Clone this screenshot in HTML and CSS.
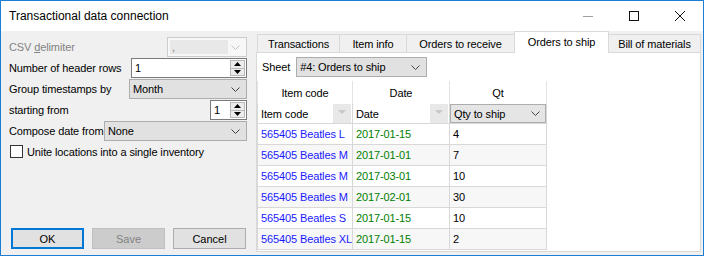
FILE: index.html
```html
<!DOCTYPE html>
<html lang="en">
<head>
  <meta charset="UTF-8" />
  <title>Transactional data connection</title>
  <link rel="stylesheet" href="styles.css">
</head>
<body>
  <div class="window">
    <div class="titlebar">
      <span class="title">Transactional data connection</span>
      <span class="caption-btn">
        <svg width="10" height="1" viewBox="0 0 10 1"><rect width="10" height="1" fill="#a0a0a0"/></svg>
      </span>
      <span class="caption-btn">
        <svg width="10" height="10" viewBox="0 0 10 10"><rect x="0.5" y="0.5" width="9" height="9" fill="none" stroke="#111"/></svg>
      </span>
      <span class="caption-btn">
        <svg width="10" height="10" viewBox="0 0 10 10"><path d="M0 0L10 10M10 0L0 10" stroke="#111" stroke-width="1"/></svg>
      </span>
    </div>

    <div class="main">
      <div class="settings">
        <div class="field">
          <label class="disabled">CSV <u>d</u>elimiter</label>
          <div class="combo combo-off w-csv">
            <span class="combo-field">,</span>
            <svg class="chev" width="9" height="5" viewBox="0 0 9 5"><path d="M0.5 0.5L4.5 4.5L8.5 0.5" fill="none" stroke="#c4c4c4"/></svg>
          </div>
        </div>
        <div class="field">
          <label>Number of header rows</label>
          <div class="spin w-rows">
            <span class="spin-value">1</span>
            <span class="spin-arrows">
              <span class="spin-btn"><svg width="7" height="4" viewBox="0 0 7 4"><path d="M3.5 0L7 4H0Z" fill="#000"/></svg></span>
              <span class="spin-btn"><svg width="7" height="4" viewBox="0 0 7 4"><path d="M0 0H7L3.5 4Z" fill="#000"/></svg></span>
            </span>
          </div>
        </div>
        <div class="field">
          <label>Group timestamps by</label>
          <div class="combo w-group">
            <span>Month</span>
            <svg class="chev" width="9" height="5" viewBox="0 0 9 5"><path d="M0.5 0.5L4.5 4.5L8.5 0.5" fill="none" stroke="#444"/></svg>
          </div>
        </div>
        <div class="field">
          <label>starting from</label>
          <div class="spin w-start">
            <span class="spin-value">1</span>
            <span class="spin-arrows">
              <span class="spin-btn"><svg width="7" height="4" viewBox="0 0 7 4"><path d="M3.5 0L7 4H0Z" fill="#000"/></svg></span>
              <span class="spin-btn"><svg width="7" height="4" viewBox="0 0 7 4"><path d="M0 0H7L3.5 4Z" fill="#000"/></svg></span>
            </span>
          </div>
        </div>
        <div class="field">
          <label>Compose date from</label>
          <div class="combo w-compose">
            <span>None</span>
            <svg class="chev" width="9" height="5" viewBox="0 0 9 5"><path d="M0.5 0.5L4.5 4.5L8.5 0.5" fill="none" stroke="#444"/></svg>
          </div>
        </div>
        <div class="check">
          <span class="check-box"></span>
          <span>Unite locations into a single inventory</span>
        </div>

        <div class="actions">
          <button class="btn btn-default">OK</button>
          <button class="btn" disabled>Save</button>
          <button class="btn">Cancel</button>
        </div>
      </div>

      <div class="tabs-area">
        <div class="tabstrip">
          <span class="tab w-t1">Transactions</span>
          <span class="tab w-t2">Item info</span>
          <span class="tab w-t3">Orders to receive</span>
          <span class="tab tab-active w-t4">Orders to ship</span>
          <span class="tab w-t5">Bill of materials</span>
        </div>
        <div class="panel">
          <div class="sheet">
            <label>Sheet</label>
            <div class="combo w-sheet">
              <span>#4: Orders to ship</span>
              <svg class="chev" width="9" height="5" viewBox="0 0 9 5"><path d="M0.5 0.5L4.5 4.5L8.5 0.5" fill="none" stroke="#444"/></svg>
            </div>
          </div>

          <table class="grid">
            <colgroup>
              <col class="c1"><col class="c2"><col class="c3">
            </colgroup>
            <thead>
              <tr class="group-row">
                <th>Item code</th>
                <th>Date</th>
                <th>Qt</th>
              </tr>
              <tr class="map-row">
                <th><div class="map"><span>Item code</span><span class="filter"><svg width="8" height="4" viewBox="0 0 8 4"><path d="M0 0H8L4 4Z" fill="#c8c8c8"/></svg></span></div></th>
                <th><div class="map"><span>Date</span><span class="filter"><svg width="8" height="4" viewBox="0 0 8 4"><path d="M0 0H8L4 4Z" fill="#c8c8c8"/></svg></span></div></th>
                <th><div class="map map-combo"><span>Qty to ship</span><svg class="chev" width="9" height="5" viewBox="0 0 9 5"><path d="M0.5 0.5L4.5 4.5L8.5 0.5" fill="none" stroke="#444"/></svg></div></th>
              </tr>
            </thead>
            <tbody>
              <tr><td class="code">565405 Beatles L</td><td class="date">2017-01-15</td><td>4</td></tr>
              <tr><td class="code">565405 Beatles M</td><td class="date">2017-01-01</td><td>7</td></tr>
              <tr><td class="code">565405 Beatles M</td><td class="date">2017-03-01</td><td>10</td></tr>
              <tr><td class="code">565405 Beatles M</td><td class="date">2017-02-01</td><td>30</td></tr>
              <tr><td class="code">565405 Beatles S</td><td class="date">2017-01-15</td><td>10</td></tr>
              <tr><td class="code">565405 Beatles XL</td><td class="date">2017-01-15</td><td>2</td></tr>
            </tbody>
          </table>
        </div>
      </div>
    </div>
  </div>
</body>
</html>
```

FILE: styles.css
```css
body {
  margin: 0;
  font-family: "Liberation Sans", Arial, sans-serif;
  font-size: 11px;
  letter-spacing: -0.12px;
  color: #000;
  background: #fff;
}
.window {
  width: 704px;
  height: 256px;
  box-sizing: border-box;
  border: 1px solid #1a7ed6;
  background: #f0f0f0;
  display: flex;
  flex-direction: column;
}

/* title bar */
.titlebar {
  height: 30px;
  flex: none;
  background: #fff;
  display: flex;
  align-items: center;
}
.title {
  flex: 1;
  padding-left: 8px;
  font-size: 12px;
  letter-spacing: 0;
}
.caption-btn {
  width: 46px;
  height: 30px;
  display: flex;
  align-items: center;
  justify-content: center;
}

.main {
  flex: 1;
  display: flex;
  min-height: 0;
}

/* left settings column */
.settings {
  width: 255px;
  box-sizing: border-box;
  padding: 6px 9px 6px 8px;
  display: flex;
  flex-direction: column;
}
.field {
  display: flex;
  align-items: center;
  height: 20px;
  margin-bottom: 1px;
}
.field label {
  white-space: nowrap;
}
.field > .combo, .field > .spin {
  margin-left: auto;
}
.disabled {
  color: #838383;
}

.combo {
  box-sizing: border-box;
  height: 20px;
  border: 1px solid #adadad;
  background: #e1e1e1;
  display: flex;
  align-items: center;
  padding: 0 6px 0 3px;
  white-space: nowrap;
}
.combo .chev {
  margin-left: auto;
}
.combo-off {
  border-color: #cccccc;
  background: #f7f7f7;
  padding-left: 2px;
}
.combo-field {
  width: 58px;
  height: 14px;
  background: #e8e8e8;
  color: #838383;
  line-height: 14px;
  padding-left: 2px;
  box-sizing: border-box;
}

.spin {
  box-sizing: border-box;
  height: 20px;
  border: 1px solid #7a7a7a;
  background: #fff;
  display: flex;
}
.spin-value {
  flex: 1;
  padding-left: 3px;
  line-height: 18px;
}
.spin-arrows {
  width: 15px;
  display: flex;
  flex-direction: column;
  padding: 1px 1px 1px 0;
}
.spin-btn {
  flex: 1;
  border: 1px solid #b9b9b9;
  background: #ececec;
  display: flex;
  align-items: center;
  justify-content: center;
}
.spin-btn + .spin-btn {
  border-top: none;
}

.w-csv { width: 80px; }
.w-rows { width: 116px; }
.w-group { width: 118px; }
.w-start { width: 37px; }
.w-compose { width: 143px; }
.w-sheet { width: 131px; }

.check {
  display: flex;
  align-items: center;
  gap: 4px;
  margin-top: 3px;
  padding-left: 1px;
}
.check-box {
  width: 13px;
  height: 13px;
  box-sizing: border-box;
  border: 1px solid #333;
  background: #fff;
}

.actions {
  margin-top: auto;
  display: flex;
  gap: 8px;
  padding-left: 2px;
}
.btn {
  width: 73px;
  height: 21px;
  box-sizing: border-box;
  border: 1px solid #adadad;
  background: #e1e1e1;
  font: inherit;
  color: #000;
  padding: 0;
}
.btn-default {
  border: 2px solid #0078d7;
}
.btn:disabled {
  background: #cccccc;
  border-color: #bfbfbf;
  color: #838383;
}

/* right tabs */
.tabs-area {
  flex: 1;
  display: flex;
  flex-direction: column;
  padding: 0 2px 3px 0;
}
.tabstrip {
  height: 21px;
  flex: none;
  display: flex;
  align-items: flex-end;
  padding-left: 1px;
  position: relative;
  z-index: 1;
}
.tab {
  height: 18px;
  box-sizing: border-box;
  border: 1px solid #d9d9d9;
  border-bottom: none;
  background: #f0f0f0;
  display: flex;
  align-items: center;
  justify-content: center;
  white-space: nowrap;
}
.tab + .tab {
  margin-left: -1px;
}
.tab-active {
  height: 22px;
  margin-bottom: -1px;
  background: #fff;
  padding-bottom: 2px;
}
.w-t1 { width: 83px; }
.w-t2 { width: 68px; }
.w-t3 { width: 109px; }
.w-t4 { width: 95px; }
.w-t5 { width: 93px; }

.panel {
  flex: 1;
  border: 1px solid #d9d9d9;
  background: #fff;
}
.sheet {
  display: flex;
  align-items: center;
  gap: 6px;
  height: 20px;
  margin: 4px 0 4px 5px;
}

/* data grid */
.grid {
  border-collapse: collapse;
  table-layout: fixed;
  width: 289px;
}
.c1 { width: 95px; }
.c2 { width: 97px; }
.c3 { width: 97px; }
.grid th, .grid td {
  padding: 0;
  font-weight: normal;
  white-space: nowrap;
  overflow: hidden;
}
.group-row th {
  height: 23px;
  text-align: center;
  border-left: 1px solid #e3e3e3;
  border-right: 1px solid #e3e3e3;
}
.map-row th {
  height: 19px;
  text-align: left;
  border: 1px solid #d8d8d8;
  border-top: none;
}
.map {
  display: flex;
  align-items: center;
  height: 19px;
  padding-left: 3px;
}
.filter {
  margin-left: auto;
  margin-right: 1px;
  width: 18px;
  height: 19px;
  background: #e8e8e8;
  display: flex;
  justify-content: center;
  padding-top: 6px;
  box-sizing: border-box;
}
.map-combo {
  border: 1px solid #adadad;
  background: #e5e5e5;
  height: 19px;
  box-sizing: border-box;
  padding-right: 5px;
}
.map-combo .chev {
  margin-left: auto;
}
.grid td {
  height: 20px;
  border: 1px solid #d8d8d8;
  padding-left: 3px;
  text-overflow: clip;
}
.grid tbody tr:nth-child(even) td {
  background: #f7f7f7;
}
.code {
  color: #1a1aff;
}
.date {
  color: #008000;
}
```
